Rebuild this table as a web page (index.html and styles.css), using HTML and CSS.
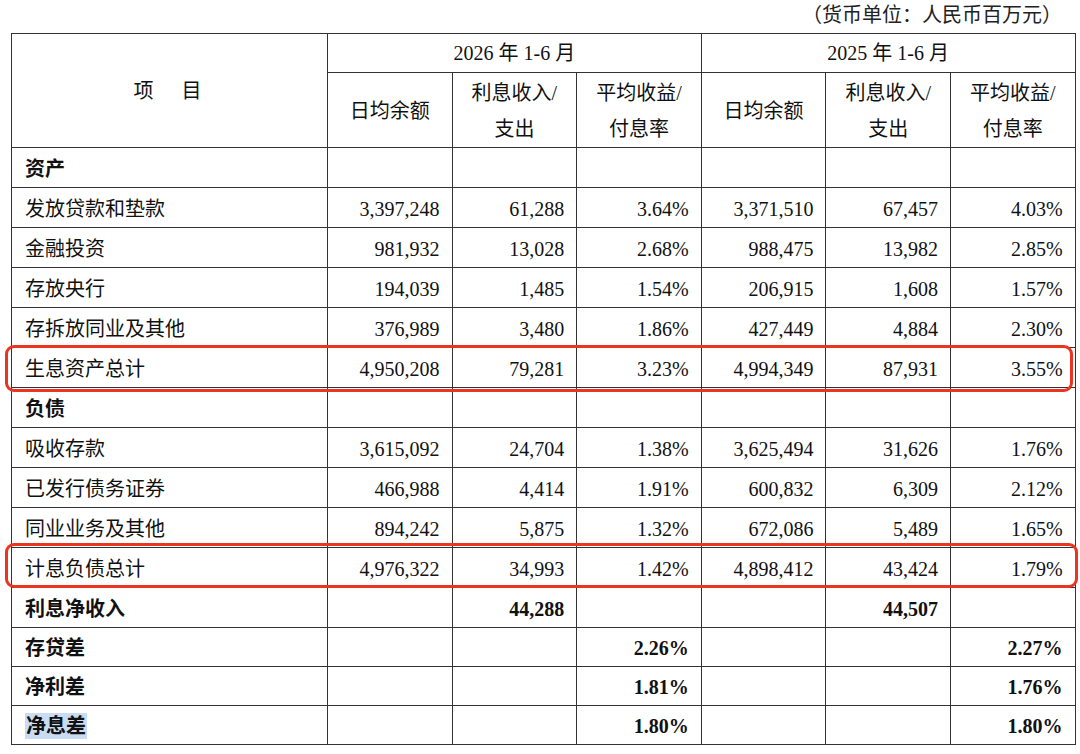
FILE: index.html
```html
<!DOCTYPE html>
<html lang="zh-CN">
<head>
<meta charset="utf-8">
<title>生息资产与计息负债</title>
<link rel="stylesheet" href="styles.css">
</head>
<body>
<div class="page">
  <div class="unit">（货币单位：人民币百万元）</div>
  <table class="tbl">
    <colgroup>
      <col class="c-item">
      <col class="c-num"><col class="c-num"><col class="c-num">
      <col class="c-num"><col class="c-num"><col class="c-num">
    </colgroup>
    <thead>
      <tr class="h1">
        <th rowspan="2" class="item-head">项　目</th>
        <th colspan="3">2026 年 1-6 月</th>
        <th colspan="3">2025 年 1-6 月</th>
      </tr>
      <tr class="h2">
        <th>日均余额</th>
        <th>利息收入/<br>支出</th>
        <th>平均收益/<br>付息率</th>
        <th>日均余额</th>
        <th>利息收入/<br>支出</th>
        <th>平均收益/<br>付息率</th>
      </tr>
    </thead>
    <tbody>
      <tr class="bold"><td class="lbl">资产</td><td></td><td></td><td></td><td></td><td></td><td></td></tr>
      <tr><td class="lbl">发放贷款和垫款</td><td>3,397,248</td><td>61,288</td><td>3.64%</td><td>3,371,510</td><td>67,457</td><td>4.03%</td></tr>
      <tr><td class="lbl">金融投资</td><td>981,932</td><td>13,028</td><td>2.68%</td><td>988,475</td><td>13,982</td><td>2.85%</td></tr>
      <tr><td class="lbl">存放央行</td><td>194,039</td><td>1,485</td><td>1.54%</td><td>206,915</td><td>1,608</td><td>1.57%</td></tr>
      <tr><td class="lbl">存拆放同业及其他</td><td>376,989</td><td>3,480</td><td>1.86%</td><td>427,449</td><td>4,884</td><td>2.30%</td></tr>
      <tr><td class="lbl">生息资产总计</td><td>4,950,208</td><td>79,281</td><td>3.23%</td><td>4,994,349</td><td>87,931</td><td>3.55%</td></tr>
      <tr class="bold"><td class="lbl">负债</td><td></td><td></td><td></td><td></td><td></td><td></td></tr>
      <tr><td class="lbl">吸收存款</td><td>3,615,092</td><td>24,704</td><td>1.38%</td><td>3,625,494</td><td>31,626</td><td>1.76%</td></tr>
      <tr><td class="lbl">已发行债务证券</td><td>466,988</td><td>4,414</td><td>1.91%</td><td>600,832</td><td>6,309</td><td>2.12%</td></tr>
      <tr><td class="lbl">同业业务及其他</td><td>894,242</td><td>5,875</td><td>1.32%</td><td>672,086</td><td>5,489</td><td>1.65%</td></tr>
      <tr><td class="lbl">计息负债总计</td><td>4,976,322</td><td>34,993</td><td>1.42%</td><td>4,898,412</td><td>43,424</td><td>1.79%</td></tr>
      <tr class="bold"><td class="lbl">利息净收入</td><td></td><td>44,288</td><td></td><td></td><td>44,507</td><td></td></tr>
      <tr class="bold short"><td class="lbl">存贷差</td><td></td><td></td><td>2.26%</td><td></td><td></td><td>2.27%</td></tr>
      <tr class="bold short"><td class="lbl">净利差</td><td></td><td></td><td>1.81%</td><td></td><td></td><td>1.76%</td></tr>
      <tr class="bold short"><td class="lbl"><span class="sel">净息差</span></td><td></td><td></td><td>1.80%</td><td></td><td></td><td>1.80%</td></tr>
    </tbody>
  </table>
  <div class="mark mark-a"></div>
  <div class="mark mark-b"></div>
</div>
</body>
</html>
```
FILE: styles.css
```css
html, body {
  margin: 0;
  padding: 0;
  background: #ffffff;
}
.page {
  position: relative;
  width: 1080px;
  height: 754px;
  font-family: "Liberation Serif", "Noto Sans CJK SC", serif;
  color: #111111;
  font-size: 20px;
}
.unit {
  height: 33px;
  box-sizing: border-box;
  padding-right: 18px;
  text-align: right;
  font-size: 20px;
  line-height: 30px;
  color: #222222;
}
.tbl {
  margin-left: 11px;
  width: 1064px;
  border-collapse: collapse;
  table-layout: fixed;
}
.c-item { width: 316px; }
.c-num { width: 124.6px; }
.tbl th, .tbl td {
  border: 1px solid #333333;
  padding: 0 12px 0 12px;
  font-weight: normal;
  white-space: nowrap;
}
.tbl th {
  text-align: center;
  line-height: 36px;
}
.tbl tr.h1 { height: 39px; }
.tbl tr.h2 { height: 75px; }
.tbl tr.h2 th { padding-top: 2px; }
.tbl tbody tr { height: 40px; }
.tbl tbody tr.short { height: 39px; }
.tbl td {
  text-align: right;
  line-height: 24px;
  padding-top: 2px;
}
.tbl td.lbl {
  text-align: left;
  padding-left: 13px;
}
.item-head {
  letter-spacing: 4px;
}
.tbl tr.bold td {
  font-weight: bold;
}
.sel {
  background: #cadcf4;
  padding: 2px 1px;
}
.mark {
  position: absolute;
  border: 3px solid #ec3520;
  border-radius: 9px;
  box-sizing: border-box;
}
.mark-a {
  left: 5px;
  top: 345px;
  width: 1068px;
  height: 47px;
}
.mark-b {
  left: 5px;
  top: 543px;
  width: 1073px;
  height: 45px;
}
```
